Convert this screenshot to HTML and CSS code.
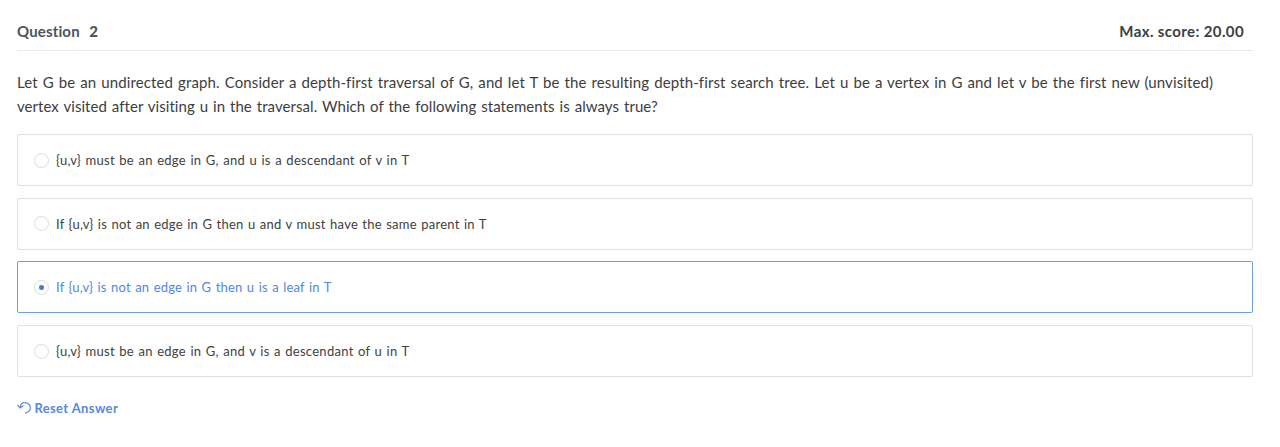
FILE: index.html
```
<!DOCTYPE html>
<html lang="en">
<head>
<meta charset="utf-8">
<title>Question 2</title>
<link rel="stylesheet" href="styles.css">
</head>
<body>
<main class="question">
  <header class="question-header">
    <div class="question-title"><span class="title-label">Question</span><strong class="title-number">2</strong></div>
    <div class="max-score">Max. score: 20.00</div>
  </header>
  <p class="prompt"><span class="prompt-first">Let G be an undirected graph. Consider a depth-first traversal of G, and let T be the resulting depth-first search tree. Let u be a vertex in G and let v be the first new (unvisited)</span><br><span class="prompt-second">vertex visited after visiting u in the traversal. Which of the following statements is always true?</span></p>
  <div class="options">
    <div class="option"><span class="radio"></span><span class="option-text">{u,v} must be an edge in G, and u is a descendant of v in T</span></div>
    <div class="option conditional"><span class="radio"></span><span class="option-text">If {u,v} is not an edge in G then u and v must have the same parent in T</span></div>
    <div class="option selected"><span class="radio"></span><span class="option-text">If {u,v} is not an edge in G then u is a leaf in T</span></div>
    <div class="option"><span class="radio"></span><span class="option-text">{u,v} must be an edge in G, and v is a descendant of u in T</span></div>
  </div>
  <div class="reset">
    <svg class="reset-icon" width="14" height="14" viewBox="0 0 14 14" fill="none" stroke="currentColor" stroke-width="1.2" stroke-linecap="round" stroke-linejoin="round"><path d="M3.2 6.6C3.3 3.5 5.3 1.6 8 1.6a5.1 5.1 0 0 1 .4 10.2"/><path d="M.7 4.4 3.2 6.9 6 4.8"/></svg>
    <span class="reset-label">Reset Answer</span>
  </div>
</main>
</body>
</html>
```
FILE: styles.css
```
body {
  margin: 0;
  background: #fff;
  color: #39424e;
  font-family: Lato, "Open Sans", sans-serif;
}
.question { padding: 12px 27px 0 17px; }
.question-header {
  display: flex;
  justify-content: space-between;
  height: 38px;
  padding-right: 9px;
  border-bottom: 1px solid #e7e9eb;
  font-size: 15px;
  line-height: 38px;
  font-weight: 700;
}
.question-title { display: flex; gap: 9.5px; color: #4c5560; }
.title-label { letter-spacing: .15px; }
.max-score { color: #3b3f43; letter-spacing: .38px; }
.prompt {
  margin: 19px 0 0;
  font-size: 15px;
  line-height: 24px;
  color: #3d3d3d;
  white-space: nowrap;
  word-spacing: 1px;
}
.prompt-first { letter-spacing: .12px; }
.prompt-second { letter-spacing: .06px; }
.options { display: grid; gap: 11.7px; margin-top: 16px; }
.option {
  display: flex;
  align-items: center;
  box-sizing: border-box;
  height: 52px;
  padding-left: 16px;
  border: 1px solid #dfe1e2;
  border-radius: 2px;
  font-size: 13px;
  color: #414141;
  letter-spacing: .29px;
  word-spacing: .8px;
}
.conditional { letter-spacing: .24px; }
.radio {
  display: grid;
  place-items: center;
  box-sizing: border-box;
  width: 15px;
  height: 15px;
  margin-right: 7px;
  border: 1px solid #dcdcdc;
  border-radius: 50%;
}
.selected { border-color: #6f9fde; color: #5287df; letter-spacing: .21px; }
.selected .radio::after {
  content: "";
  width: 5.5px;
  height: 5.5px;
  border-radius: 50%;
  background: #3d7de0;
}
.reset {
  display: flex;
  align-items: center;
  gap: 3.4px;
  height: 20px;
  margin-top: 21.3px;
  color: #5588df;
  font-size: 13px;
  font-weight: 700;
}
.reset-label { letter-spacing: .38px; }
```
